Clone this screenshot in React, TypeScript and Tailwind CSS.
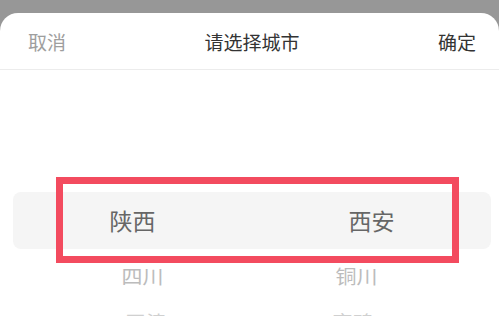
import React from "react";

const font = { fontFamily: '"Noto Sans CJK SC", "Noto Sans", sans-serif' };

export default function App() {
  return (
    <div
      className="relative w-[499px] h-[316px] overflow-hidden bg-[#979797] pt-[13px]"
      style={font}
    >
      <div className="h-full bg-white rounded-t-[18px] flex flex-col">
        <div className="h-[57px] shrink-0 flex items-center justify-between pl-[28px] pr-[23px] border-b border-[#ececec]">
          <span className="text-[19px] text-[#9e9e9e] leading-none">取消</span>
          <span className="text-[19px] text-[#333333] leading-none">请选择城市</span>
          <span className="text-[19px] text-[#333333] leading-none">确定</span>
        </div>
        <div className="flex flex-col">
          <div className="h-[122px]" />
          <div className="mx-[13px] w-[478px] h-[57px] rounded-[8px] bg-[#f5f5f5] flex items-center justify-center">
            <div className="w-[240px] text-center text-[23px] text-[#666666] leading-none">陕西</div>
            <div className="w-[240px] text-center text-[23px] text-[#666666] leading-none">西安</div>
          </div>
          <div className="h-[55px] flex items-center justify-center">
            <div className="w-[214px] text-center text-[21px] text-[#bcbcbc] leading-none scale-y-90">四川</div>
            <div className="w-[214px] text-center text-[21px] text-[#bcbcbc] leading-none scale-y-90">铜川</div>
          </div>
          <div className="h-[32px] flex items-center justify-center">
            <div className="w-[207px] text-center text-[21px] text-[#d0d0d0] leading-none scale-y-75">天津</div>
            <div className="w-[207px] text-center text-[21px] text-[#d0d0d0] leading-none scale-y-75">宝鸡</div>
          </div>
        </div>
      </div>
      <div className="absolute left-[56px] top-[177px] w-[403px] h-[86px] border-[7px] border-[#f34b5f]" />
    </div>
  );
}
